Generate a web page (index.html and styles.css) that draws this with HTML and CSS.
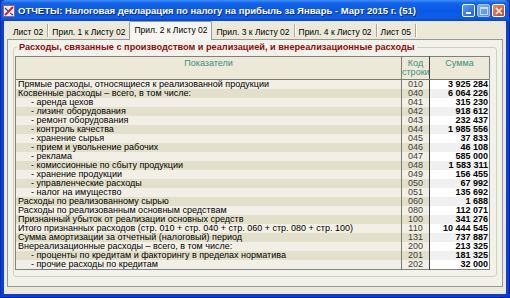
FILE: index.html
```html
<!DOCTYPE html>
<html lang="ru">
<head>
    <meta charset="UTF-8">
    <title>ОТЧЕТЫ</title>
    <link rel="stylesheet" href="styles.css">
</head>
<body>
    <div class="window">
        <div class="titlebar">
            <svg class="app-icon" width="12" height="12" viewBox="0 0 12 12">
                <rect x="0.5" y="0.5" width="11" height="11" fill="#f4e8ec" stroke="#8c6c7c"/>
                <path d="M2 10 L10 2" stroke="#d02020" stroke-width="2"/>
                <path d="M2 3 L5 6 M7 8 L10 10" stroke="#3050a0" stroke-width="1.2"/>
            </svg>
            <span class="title">ОТЧЕТЫ: Налоговая декларация по налогу на прибыль за Январь - Март 2015 г. (51)</span>
            <div class="caption-buttons">
                <span class="cbtn minimize"><i></i></span>
                <span class="cbtn maximize disabled"><i></i></span>
                <span class="cbtn close">
                    <svg width="8" height="8" viewBox="0 0 8 8"><path d="M1 1 L7 7 M7 1 L1 7" stroke="#fff" stroke-width="1.6"/></svg>
                </span>
            </div>
        </div>
        <div class="client">
            <div class="tabs">
                <span class="tab">Лист 02</span>
                <span class="tab">Прил. 1 к Листу 02</span>
                <span class="tab active">Прил. 2 к Листу 02</span>
                <span class="tab">Прил. 3 к Листу 02</span>
                <span class="tab">Прил. 4 к Листу 02</span>
                <span class="tab">Лист 05</span>
            </div>
            <div class="panel">
                <div class="group">
                    <div class="group-title">Расходы, связанные с производством и реализацией, и внереализационные расходы</div>
                    <table class="grid">
                        <thead>
                            <tr>
                                <th class="col-name">Показатели</th>
                                <th class="col-code">Код<br>строки</th>
                                <th class="col-sum">Сумма</th>
                            </tr>
                        </thead>
                        <tbody>
                            <tr><td>Прямые расходы, относящиеся к реализованной продукции</td><td class="code">010</td><td class="sum">3 925 284</td></tr>
                            <tr><td>Косвенные расходы – всего, в том числе:</td><td class="code">040</td><td class="sum">6 064 226</td></tr>
                            <tr><td class="sub">- аренда цехов</td><td class="code">041</td><td class="sum">315 230</td></tr>
                            <tr><td class="sub">- лизинг оборудования</td><td class="code">042</td><td class="sum">918 612</td></tr>
                            <tr><td class="sub">- ремонт оборудования</td><td class="code">043</td><td class="sum">232 437</td></tr>
                            <tr><td class="sub">- контроль качества</td><td class="code">044</td><td class="sum">1 985 556</td></tr>
                            <tr><td class="sub">- хранение сырья</td><td class="code">045</td><td class="sum">37 833</td></tr>
                            <tr><td class="sub">- прием и увольнение рабочих</td><td class="code">046</td><td class="sum">46 108</td></tr>
                            <tr><td class="sub">- реклама</td><td class="code">047</td><td class="sum">585 000</td></tr>
                            <tr><td class="sub">- комиссионные по сбыту продукции</td><td class="code">048</td><td class="sum">1 583 311</td></tr>
                            <tr><td class="sub">- хранение продукции</td><td class="code">049</td><td class="sum">156 455</td></tr>
                            <tr><td class="sub">- управленческие расходы</td><td class="code">050</td><td class="sum">67 992</td></tr>
                            <tr><td class="sub">- налог на имущество</td><td class="code">051</td><td class="sum">135 692</td></tr>
                            <tr><td>Расходы по реализованному сырью</td><td class="code">060</td><td class="sum">1 688</td></tr>
                            <tr><td>Расходы по реализованным основным средствам</td><td class="code">080</td><td class="sum">112 071</td></tr>
                            <tr><td>Признанный убыток от реализации основных средств</td><td class="code">100</td><td class="sum">341 276</td></tr>
                            <tr><td>Итого признанных расходов (стр. 010 + стр. 040 + стр. 060 + стр. 080 + стр. 100)</td><td class="code">110</td><td class="sum">10 444 545</td></tr>
                            <tr><td>Сумма амортизации за отчетный (налоговый) период</td><td class="code">131</td><td class="sum">737 887</td></tr>
                            <tr><td>Внереализационные расходы – всего, в том числе:</td><td class="code">200</td><td class="sum">213 325</td></tr>
                            <tr><td class="sub">- проценты по кредитам и факторингу в пределах норматива</td><td class="code">201</td><td class="sum">181 325</td></tr>
                            <tr><td class="sub">- прочие расходы по кредитам</td><td class="code">202</td><td class="sum">32 000</td></tr>
                        </tbody>
                    </table>
                </div>
            </div>
        </div>
    </div>
</body>
</html>
```

FILE: styles.css
```css
body {
    margin: 0;
    font-family: "Liberation Sans", Arial, sans-serif;
    font-size: 9px;
    background: #fff;
}
.window {
    width: 510px;
    height: 298px;
    box-sizing: border-box;
    display: flex;
    flex-direction: column;
    background: #0b3fd4;
    border-left: 1px solid #0831a8;
    border-right: 1px solid #001ea0;
    border-bottom: 1px solid #001ea0;
    padding: 0 3px 3px 3px;
}
.titlebar {
    height: 21px;
    margin: 0 -3px;
    display: flex;
    align-items: center;
    padding: 0 4px 0 2px;
    background: linear-gradient(#3d8ff8 0%, #1263ea 15%, #0a58e4 50%, #0c5ded 85%, #0845c8 100%);
    border-radius: 5px 5px 0 0;
}
.app-icon {
    flex: none;
    margin-right: 3px;
}
.title {
    color: #fff;
    font-weight: bold;
    font-size: 9.5px;
    white-space: nowrap;
    text-shadow: 1px 1px 0 #0a2a80;
    flex: 1;
}
.caption-buttons {
    display: flex;
    gap: 2px;
}
.cbtn {
    width: 13px;
    height: 13px;
    box-sizing: border-box;
    border: 1px solid #fff;
    border-radius: 2px;
    display: flex;
    align-items: center;
    justify-content: center;
    position: relative;
    background: linear-gradient(135deg, #5c9bff, #2260e0);
}
.minimize i {
    position: absolute;
    left: 3px;
    bottom: 2px;
    width: 5px;
    height: 2px;
    background: #fff;
}
.maximize.disabled {
    background: linear-gradient(135deg, #7fb0f8, #5a8ee8);
    border-color: #a8c8fa;
}
.maximize i {
    width: 6px;
    height: 5px;
    border: 1px solid #c8dcfc;
    border-top-width: 2px;
}
.close {
    background: linear-gradient(135deg, #f08a66, #d5421c);
}
.close svg {
    display: block;
}
.client {
    flex: 1;
    background: #ece9d8;
    display: flex;
    flex-direction: column;
    padding: 1px 3px 7px 3px;
}
.tabs {
    display: flex;
    height: 17px;
    align-items: stretch;
    padding-left: 2px;
    border-bottom: 1px solid #919b9c;
    font-size: 8.5px;
}
.tab {
    display: flex;
    align-items: center;
    padding: 2px 4px 0 4px;
    color: #000;
    white-space: nowrap;
    border-right: 1px solid #aca899;
    box-shadow: 1px 0 0 #fff;
    margin: 2px 0;
}
.tab.active {
    background: #f6f5ef;
    margin: -1px 0 -1px -1px;
    padding: 0 4px 3px 4px;
    border: 1px solid #919b9c;
    border-bottom: none;
    border-radius: 2px 2px 0 0;
    box-shadow: none;
}
.panel {
    flex: 1;
    border: 1px solid #919b9c;
    border-top: none;
    background: #f3f2ea;
    padding: 1px 5px 6px 5px;
}
.group {
    position: relative;
    border: 1px solid #d0d0bf;
    border-radius: 3px;
    margin-top: 6px;
    padding: 8px 6px 6px 1px;
}
.group-title {
    position: absolute;
    left: 3px;
    top: -6px;
    padding: 0 2px;
    background: #f3f2ea;
    color: #8a1010;
    font-weight: bold;
    font-size: 9.2px;
    white-space: nowrap;
}
.grid {
    width: 100%;
    border-collapse: collapse;
    border: 1px solid #808080;
    table-layout: fixed;
}
.grid th {
    height: 20px;
    font-weight: normal;
    color: #3a9080;
    background: #ece9d8;
    border-bottom: 1px solid #7a7a70;
    vertical-align: top;
    padding: 2px 0 0 0;
    line-height: 9px;
}
.grid th.col-code {
    width: 27px;
    border-left: 1px solid #7a7a70;
    border-right: 1px solid #404040;
}
.grid th.col-sum {
    width: 59px;
}
.grid td {
    height: 9px;
    line-height: 9px;
    padding: 0 2px;
    white-space: nowrap;
    overflow: hidden;
    background: #f2f0e6;
}
.grid tbody tr:nth-child(even) td {
    background: #e2dfcb;
}
.grid td.sub {
    padding-left: 15px;
}
.grid td.code {
    text-align: center;
    color: #404040;
    padding: 0;
    border-left: 1px solid #7a7a70;
    border-right: 1px solid #404040;
}
.grid td.sum {
    text-align: right;
    font-weight: bold;
    background: #fff;
    padding-right: 1px;
}
.grid tbody tr:nth-child(even) td.sum {
    background: #f0f0f0;
}
```
